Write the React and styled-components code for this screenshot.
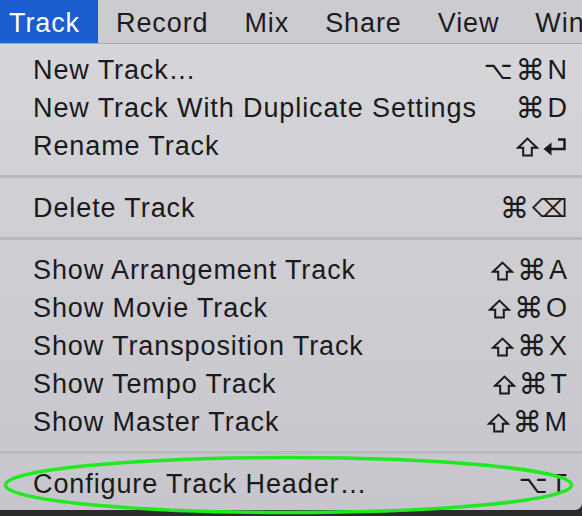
import React from "react";
import styled, { createGlobalStyle } from "styled-components";

const GlobalStyle = createGlobalStyle`
  html, body {
    margin: 0;
    padding: 0;
    background: #2b2b2e;
  }
  body {
    width: 582px;
    height: 516px;
    overflow: hidden;
    font-family: "Liberation Sans", Arial, "DejaVu Sans", sans-serif;
  }
`;

const menuBarItems = ["Track", "Record", "Mix", "Share", "View", "Window"];

// shortcut tokens: "shift" and "return" are drawn, the rest is text
const sections = [
  [
    { label: "New Track…", keys: ["⌥", "⌘", "N"] },
    { label: "New Track With Duplicate Settings", keys: ["⌘", "D"] },
    { label: "Rename Track", keys: ["shift", "return"] },
  ],
  [{ label: "Delete Track", keys: ["⌘", "⌫"] }],
  [
    { label: "Show Arrangement Track", keys: ["shift", "⌘", "A"] },
    { label: "Show Movie Track", keys: ["shift", "⌘", "O"] },
    { label: "Show Transposition Track", keys: ["shift", "⌘", "X"] },
    { label: "Show Tempo Track", keys: ["shift", "⌘", "T"] },
    { label: "Show Master Track", keys: ["shift", "⌘", "M"] },
  ],
  [{ label: "Configure Track Header…", keys: ["⌥", "T"] }],
];

const ShiftIcon = () => (
  <KeyIcon width="23" height="20" viewBox="0 0 23 20">
    <path
      d="M11.5 1.6 L21 10.8 H15.8 V18.6 H7.2 V10.8 H2 Z"
      fill="none"
      stroke="#1a1a1c"
      strokeWidth="2"
      strokeLinejoin="miter"
    />
  </KeyIcon>
);

const ReturnIcon = () => (
  <KeyIcon width="25" height="20" viewBox="0 0 25 20">
    <path d="M16 2.5 H22.5 V12 H8" fill="none" stroke="#1a1a1c" strokeWidth="2.4" />
    <path d="M1.5 12 L9.5 5.5 V18.5 Z" fill="#1a1a1c" />
  </KeyIcon>
);

const kindOf = (k) => (/[A-Z]/.test(k) ? "letter" : k === "⌘" ? "cmd" : "symbol");

const renderKey = (k, i) => {
  if (k === "shift") return <ShiftIcon key={i} />;
  if (k === "return") return <ReturnIcon key={i} />;
  return (
    <KeyGlyph key={i} $kind={kindOf(k)}>
      {k}
    </KeyGlyph>
  );
};

const App = () => {
  return (
    <Screen>
      <GlobalStyle />
      <MenuBar>
        {menuBarItems.map((item, i) => (
          <BarItem key={item} $active={i === 0}>
            {item}
          </BarItem>
        ))}
      </MenuBar>
      <Dropdown>
        {sections.map((rows, s) => (
          <React.Fragment key={s}>
            {s > 0 && <Separator />}
            {rows.map((row) => (
              <Row key={row.label}>
                <Label>{row.label}</Label>
                <Keys>{row.keys.map(renderKey)}</Keys>
              </Row>
            ))}
          </React.Fragment>
        ))}
      </Dropdown>
      <Highlight viewBox="0 0 582 516" width="582" height="516">
        <ellipse
          cx="288.5"
          cy="485"
          rx="283"
          ry="27.5"
          fill="none"
          stroke="#22e822"
          strokeWidth="3.5"
        />
      </Highlight>
    </Screen>
  );
};

const Screen = styled.div`
  position: relative;
  width: 582px;
  height: 516px;
  overflow: hidden;
`;

const MenuBar = styled.div`
  display: flex;
  height: 43px;
  margin-left: -9px;
  background: #cbcbd0;
  border-bottom: 1px solid #a9a9ae;
  white-space: nowrap;
  overflow: hidden;
`;

const BarItem = styled.div`
  display: flex;
  align-items: center;
  padding: 3px 18px 0;
  font-size: 27px;
  letter-spacing: 0.9px;
  color: ${({ $active }) => ($active ? "#ffffff" : "#1c1c1e")};
  background: ${({ $active }) => ($active ? "#1b5ccf" : "transparent")};
`;

const Dropdown = styled.div`
  display: flex;
  flex-direction: column;
  height: 466px;
  box-sizing: border-box;
  padding: 7px 0 6px;
  background: linear-gradient(#d6d6da, #cdcdd2 50%, #c6c6cc);
  border-bottom-right-radius: 7px;
`;

const Row = styled.div`
  display: flex;
  align-items: center;
  justify-content: space-between;
  height: 38px;
  padding: 0 15px 0 33px;
  color: #1a1a1c;
  font-size: 27px;
  letter-spacing: 0.9px;
`;

const Label = styled.span`
  white-space: nowrap;
`;

const Keys = styled.span`
  display: flex;
  align-items: center;
  gap: 3px;
  white-space: nowrap;
`;

const glyphSize = { letter: "27px", cmd: "29px", symbol: "25px" };

const KeyGlyph = styled.span`
  font-family: ${({ $kind }) =>
    $kind === "letter" ? `"Liberation Sans", Arial, sans-serif` : `"DejaVu Sans", sans-serif`};
  font-size: ${({ $kind }) => glyphSize[$kind]};
  letter-spacing: 0;
  line-height: 1;
`;

const KeyIcon = styled.svg`
  display: block;
  margin-top: 1px;
`;

const Separator = styled.div`
  height: 3px;
  margin: 10px 0 11px;
  background: #b8b8bd;
`;

const Highlight = styled.svg`
  position: absolute;
  left: 0;
  top: 0;
  pointer-events: none;
`;

export default App;
